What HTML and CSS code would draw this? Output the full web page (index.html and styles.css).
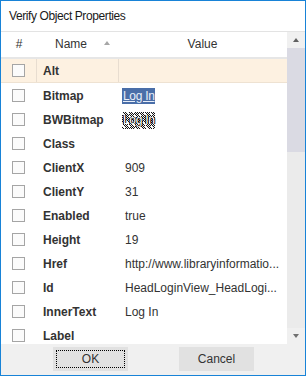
FILE: index.html
```html
<!DOCTYPE html>
<html lang="en">
  <head>
    <meta charset="UTF-8" />
    <title>Verify Object Properties</title>
    <link rel="stylesheet" href="styles.css">
  </head>
  <body>
    <div class="dialog">
      <div class="title-bar">Verify Object Properties</div>

      <div class="grid-area">
        <div class="grid">
          <div class="grid-header">
            <div class="col-check">#</div>
            <div class="col-name">
              <span>Name</span>
              <span class="sort-arrow"></span>
            </div>
            <div class="col-value">Value</div>
          </div>

          <div class="rows">
            <div class="row selected">
              <div class="cell-check"><span class="checkbox"></span></div>
              <div class="cell-name">Alt</div>
              <div class="cell-value"></div>
            </div>
            <div class="row">
              <div class="cell-check"><span class="checkbox"></span></div>
              <div class="cell-name">Bitmap</div>
              <div class="cell-value"><span class="bitmap">Log In</span></div>
            </div>
            <div class="row">
              <div class="cell-check"><span class="checkbox"></span></div>
              <div class="cell-name">BWBitmap</div>
              <div class="cell-value"><span class="bitmap bw">Log In</span></div>
            </div>
            <div class="row">
              <div class="cell-check"><span class="checkbox"></span></div>
              <div class="cell-name">Class</div>
              <div class="cell-value"></div>
            </div>
            <div class="row">
              <div class="cell-check"><span class="checkbox"></span></div>
              <div class="cell-name">ClientX</div>
              <div class="cell-value">909</div>
            </div>
            <div class="row">
              <div class="cell-check"><span class="checkbox"></span></div>
              <div class="cell-name">ClientY</div>
              <div class="cell-value">31</div>
            </div>
            <div class="row">
              <div class="cell-check"><span class="checkbox"></span></div>
              <div class="cell-name">Enabled</div>
              <div class="cell-value">true</div>
            </div>
            <div class="row">
              <div class="cell-check"><span class="checkbox"></span></div>
              <div class="cell-name">Height</div>
              <div class="cell-value">19</div>
            </div>
            <div class="row">
              <div class="cell-check"><span class="checkbox"></span></div>
              <div class="cell-name">Href</div>
              <div class="cell-value">http://www.libraryinformatio...</div>
            </div>
            <div class="row">
              <div class="cell-check"><span class="checkbox"></span></div>
              <div class="cell-name">Id</div>
              <div class="cell-value">HeadLoginView_HeadLogi...</div>
            </div>
            <div class="row">
              <div class="cell-check"><span class="checkbox"></span></div>
              <div class="cell-name">InnerText</div>
              <div class="cell-value">Log In</div>
            </div>
            <div class="row">
              <div class="cell-check"><span class="checkbox"></span></div>
              <div class="cell-name">Label</div>
              <div class="cell-value"></div>
            </div>
          </div>
        </div>

        <div class="scrollbar">
          <div class="scroll-btn"><span class="arrow-up"></span></div>
          <div class="scroll-track">
            <div class="scroll-thumb"></div>
          </div>
          <div class="scroll-btn"><span class="arrow-down"></span></div>
        </div>
      </div>

      <div class="footer">
        <button class="btn focused">OK</button>
        <button class="btn">Cancel</button>
      </div>
    </div>
  </body>
</html>
```

FILE: styles.css
```css
:root {
  --accent-border: #1883d7;
  --text-color: #333;
  --grid-line: #e6e6e6;
  --footer-background: #f0f0f0;
  --button-background: #e1e1e1;
}

* {
  margin: 0;
  padding: 0;
  box-sizing: border-box;
  font-family: "Liberation Sans", Arial, sans-serif;
}

body {
  background: #fff;
}

.dialog {
  width: 306px;
  height: 376px;
  border: 1px solid var(--accent-border);
  display: flex;
  flex-direction: column;
  background: #fff;
  overflow: hidden;
}

.title-bar {
  height: 31px;
  flex-shrink: 0;
  padding: 0 0 1px 8px;
  display: flex;
  align-items: center;
  font-size: 12px;
  letter-spacing: -0.4px;
  color: #1a1a1a;
  border-bottom: 1px solid #e3e3e3;
}

/* Property grid */
.grid-area {
  flex: 1;
  display: flex;
  min-height: 0;
}

.grid {
  flex: 1;
  display: flex;
  flex-direction: column;
  overflow: hidden;
}

.grid-header,
.row {
  display: grid;
  grid-template-columns: 36px 82px 168px;
  font-size: 12px;
  color: var(--text-color);
}

.grid-header {
  height: 27px;
  flex-shrink: 0;
  align-items: center;
  padding-bottom: 1px;
  border-bottom: 2px solid var(--grid-line);
}

.grid-header .col-check,
.grid-header .col-value {
  text-align: center;
}

.grid-header .col-value {
  padding-right: 1px;
}

.grid-header .col-name {
  display: flex;
  align-items: center;
  gap: 17px;
  padding-left: 18px;
}

.sort-arrow {
  width: 0;
  height: 0;
  border-left: 3.5px solid transparent;
  border-right: 3.5px solid transparent;
  border-bottom: 4px solid #a6a6a6;
  margin-top: -3px;
}

.rows {
  flex: 1;
  overflow: hidden;
}

.row {
  height: 24px;
  align-items: center;
  padding-top: 1px;
}

.row.selected {
  background: #fdf1e1;
  border-bottom: 1px solid #eee2d2;
  padding-top: 0;
}

.row.selected > div {
  height: 100%;
  display: flex;
  align-items: center;
  border-right: 1px solid #e8ddd0;
}

.row.selected > div:last-child {
  border-right: none;
}

.cell-check {
  display: flex;
  justify-content: center;
  padding-right: 1px;
}

.checkbox {
  width: 13px;
  height: 13px;
  border: 1px solid #a5a5a5;
  background: #fbfbfb;
  display: block;
}

.cell-name {
  font-weight: bold;
  padding-left: 6px;
}

.cell-value {
  padding-left: 6px;
  padding-right: 4px;
  white-space: nowrap;
  overflow: hidden;
}

.bitmap {
  display: inline-block;
  width: 33px;
  height: 16px;
  margin-left: -3px;
  padding-left: 1px;
  line-height: 16px;
  vertical-align: middle;
  letter-spacing: -0.3px;
  background: #4a6ea8;
  color: #e8eef8;
  text-decoration: underline;
}

.bitmap.bw {
  height: 17px;
  margin-top: 1px;
  color: #fff;
  text-decoration: none;
  text-shadow: 1px 0 0 #000, -1px 0 0 #000;
  background:
    repeating-linear-gradient(63deg, transparent 0 2px, #fff 2px 3px, transparent 3px 5px),
    repeating-conic-gradient(#111 0 25%, #f4f4f4 0 50%) 0 0 / 2px 2px;
}

/* Scrollbar */
.scrollbar {
  width: 18px;
  flex-shrink: 0;
  display: flex;
  flex-direction: column;
  background: #ebebeb;
}

.scroll-btn {
  height: 16px;
  flex-shrink: 0;
  display: flex;
  justify-content: center;
  align-items: center;
  background: #f0f0f0;
}

.scroll-track {
  flex: 1;
}

.scroll-thumb {
  height: 104px;
  background: #dadae3;
}

.arrow-up,
.arrow-down {
  width: 0;
  height: 0;
  border-left: 3.5px solid transparent;
  border-right: 3.5px solid transparent;
}

.arrow-up {
  border-bottom: 4px solid #606060;
}

.arrow-down {
  border-top: 4px solid #707070;
}

/* Buttons */
.footer {
  height: 31px;
  flex-shrink: 0;
  display: flex;
  justify-content: center;
  align-items: flex-start;
  gap: 51px;
  padding: 3px 0 0 1px;
  background: var(--footer-background);
}

.btn {
  width: 75px;
  height: 24px;
  border: none;
  background: var(--button-background);
  color: var(--text-color);
  font-size: 12px;
  position: relative;
}

.btn.focused::after {
  content: "";
  position: absolute;
  inset: 3px;
  border: 1px dotted #000;
}
```
